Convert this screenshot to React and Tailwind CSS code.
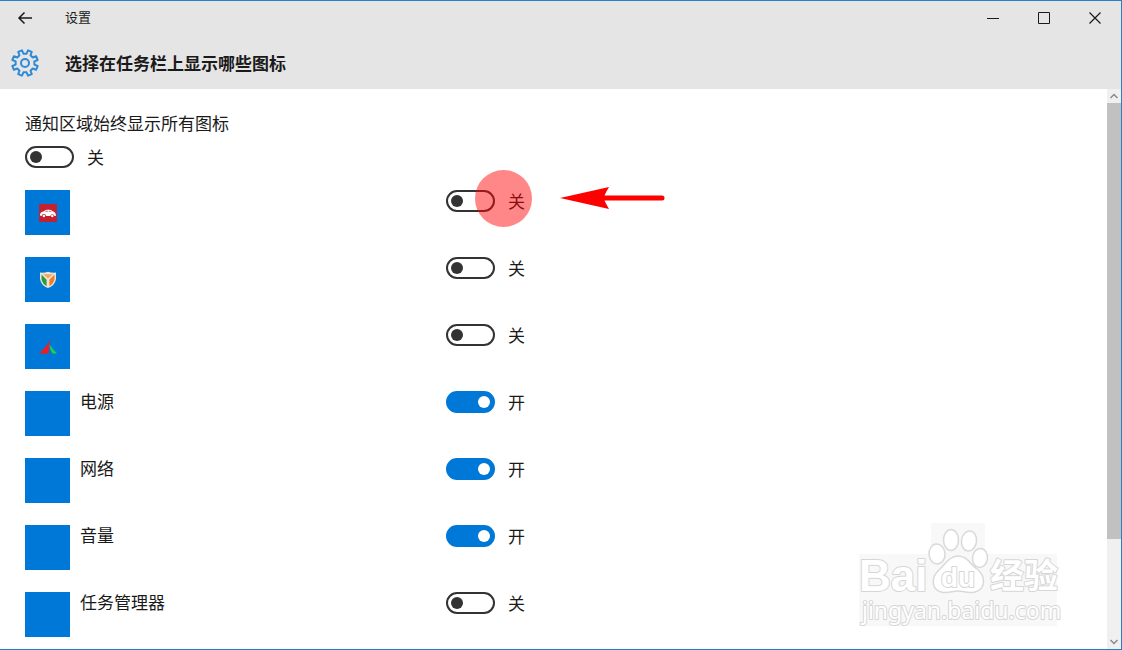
import { useState } from "react";

const items = [
  { id: "car", name: "", icon: "car", on: false },
  { id: "guard", name: "", icon: "shield", on: false },
  { id: "sail", name: "", icon: "sail", on: false },
  { id: "power", name: "电源", on: true },
  { id: "network", name: "网络", on: true },
  { id: "volume", name: "音量", on: true },
  { id: "taskmgr", name: "任务管理器", on: false },
];

// eight teeth, with a gap between two of them at the top
function gearPath() {
  const points = [];
  for (let i = 0; i < 8; i++) {
    const mid = 22.5 + i * 45;
    [[-13, 9.5], [-9, 13], [9, 13], [13, 9.5]].forEach(([offset, r]) => {
      const a = ((mid + offset) * Math.PI) / 180;
      points.push(`${(14 + r * Math.cos(a)).toFixed(2)} ${(14 + r * Math.sin(a)).toFixed(2)}`);
    });
  }
  return `M${points.join("L")}Z`;
}

function Gear() {
  return (
    <svg className="w-7 h-7" viewBox="0 0 28 28" fill="none" stroke="#2f8ad6" strokeWidth="2" strokeLinejoin="round">
      <path d={gearPath()} />
      <circle cx="14" cy="14" r="4" />
    </svg>
  );
}

function TrayIcon({ type }) {
  if (type === "car") {
    return (
      <svg className="w-[18px] h-[18px]" viewBox="0 0 18 18">
        <rect width="18" height="18" rx="1" fill="#c4202f" />
        <path d="M1 10.5C1.2 8.6 3 7.6 5 7.2C7 5.4 11.5 5.2 13.6 7.2C15.6 7.8 17 9 17 11.8L15.4 12A2.1 2.1 0 0 0 11.3 12H7A2.1 2.1 0 0 0 2.8 12L1 11.6Z" fill="#fff" />
        <path d="M6 7.6C7.2 6.6 8 6.5 8.8 6.5V8H6ZM9.8 6.5C11.2 6.6 12 7 12.8 8H9.8Z" fill="#d98a90" />
        <circle cx="4.9" cy="12" r="1.2" fill="#fff" />
        <circle cx="13.3" cy="12" r="1.2" fill="#fff" />
      </svg>
    );
  }
  if (type === "shield") {
    return (
      <svg className="w-[18px] h-[18px]" viewBox="0 0 18 18">
        <path d="M1 1.5Q5 2 9 .8Q13 2 17 1.500V8Q16 14.5 9 17Q2 14.5 1 8Z" fill="#e9e4dc" />
        <path d="M2.5 3.5L7.6 8.8V15Q3 12.5 2.5 8Z" fill="#2f9a3c" />
        <path d="M4 3Q9 3.6 14 3L9 7.5Z" fill="#f7a55b" />
        <path d="M15.5 3.5L10.4 8.8V15Q15 12.5 15.5 8Z" fill="#f47b20" />
      </svg>
    );
  }
  return (
    <svg className="w-[18px] h-[18px]" viewBox="0 0 18 18">
      <path d="M12.2 1Q10.8 4 10.2 7L9.800 15.500H0Q7.500 9 12.2 1Z" fill="#ee1c25" />
      <path d="M10.2 6.500Q13.500 10.500 18 15.500H13.500Q11 12 10.2 6.500Z" fill="#19d24f" />
    </svg>
  );
}

function Toggle({ id, label, checked, onChange }) {
  return (
    <div className="flex items-center gap-[13px]">
      <input
        id={id}
        type="checkbox"
        role="switch"
        aria-label={label}
        checked={checked}
        onChange={onChange}
        className="appearance-none flex items-center shrink-0 w-[49px] h-[22px] px-[3px] rounded-full border-2 border-[#333] bg-white before:content-[''] before:block before:w-3 before:h-3 before:rounded-full before:bg-[#333] checked:justify-end checked:border-[#0078d7] checked:bg-[#0078d7] checked:before:bg-white"
      />
      <label htmlFor={id} className="leading-[22px]">{checked ? "开" : "关"}</label>
    </div>
  );
}

function Pointer() {
  return (
    <>
      <span className="absolute -top-5 left-[29px] w-[57px] h-[57px] rounded-full bg-[#ff0000]/47 pointer-events-none" />
      <svg className="absolute -top-1 left-[114px] w-[106px] h-6" viewBox="0 0 106 24" fill="#fe0000">
        <path d="M0 12L49 1Q46 6 44.500 9.500H102Q104.500 9.500 104.500 12T102 14.500H44.500Q46 18 49 23Z" />
      </svg>
    </>
  );
}

function Watermark() {
  return (
    <svg className="absolute right-[58px] bottom-5 w-[206px] h-[108px] pointer-events-none" viewBox="0 0 206 108" aria-label="Baidu 经验">
      <path d="M2 33H74V2H128V33H200V105H2Z" fill="#f8f8f8" />
      <g fill="#fff" stroke="#d9d9d9" strokeWidth="1.500">
        <ellipse cx="80" cy="33" rx="8" ry="10" transform="rotate(-4 80 33)" />
        <ellipse cx="94" cy="19" rx="7.500" ry="10.500" />
        <ellipse cx="112" cy="20" rx="7.500" ry="10" transform="rotate(8 112 20)" />
        <ellipse cx="123" cy="37" rx="7.500" ry="9.500" transform="rotate(6 123 37)" />
        <path d="M101 35C110 35 114 44 120 48C129 55 129 68 118 71C111 73 107 70 101 70C95 70 91 73 84 71C74 68 74 56 82 49C88 44 92 35 101 35Z" />
      </g>
      <g fill="#fff" stroke="#d6d6d6" strokeWidth="2" paintOrder="stroke" strokeLinejoin="round">
        <text x="2" y="70" fontSize="44" fontWeight="bold" fontFamily="'Liberation Sans', sans-serif">Bai</text>
        <text x="84" y="66" fontSize="28" fontWeight="bold" fontFamily="'Liberation Sans', sans-serif">du</text>
        <text x="133" y="67" fontSize="34" fontWeight="bold" fontFamily="'Noto Sans CJK SC', sans-serif">经验</text>
        <text x="5" y="98" fontSize="23" fontFamily="'Noto Sans', sans-serif">jingyan.baidu.com</text>
      </g>
    </svg>
  );
}

export default function App() {
  const [showAll, setShowAll] = useState(false);
  const [state, setState] = useState(() => Object.fromEntries(items.map((i) => [i.id, i.on])));

  const flip = (id) => setState((s) => ({ ...s, [id]: !s[id] }));

  return (
    <div className="relative flex flex-col h-screen overflow-hidden border-t border-r border-b border-[#2a7fc4] bg-white text-[17px] text-[#1a1a1a] font-['Noto_Sans_CJK_SC',sans-serif]">
      <header className="bg-[#e5e5e5]">
        <div className="flex h-[34px] items-center">
          <button aria-label="返回" className="w-[50px] h-full flex items-center justify-center">
            <svg className="w-4 h-4" viewBox="0 0 16 16" fill="none" stroke="#1a1a1a" strokeWidth="1.500">
              <path d="M15 8H2M7.500 2.500L2 8L7.500 13.500" />
            </svg>
          </button>
          <span className="ml-[15px] pb-0.5 text-[13px]">设置</span>
          <div className="ml-auto mr-px flex h-full">
            <button aria-label="最小化" className="w-[51px] flex items-center justify-center">
              <svg className="w-3 h-3" viewBox="0 0 12 12" stroke="#1a1a1a"><path d="M0 6.500H12" /></svg>
            </button>
            <button aria-label="最大化" className="w-[51px] flex items-center justify-center">
              <svg className="w-3 h-3" viewBox="0 0 12 12" fill="none" stroke="#1a1a1a"><path d="M.5 .5H11.500V11.500H.5Z" /></svg>
            </button>
            <button aria-label="关闭" className="w-[51px] flex items-center justify-center">
              <svg className="w-3 h-3" viewBox="0 0 12 12" stroke="#1a1a1a" strokeWidth="1.200"><path d="M.5 .5L11.500 11.500M11.500 .5L.5 11.500" /></svg>
            </button>
          </div>
        </div>
        <div className="flex h-[54px] items-center pl-[11px] pt-0.5 gap-[26px]">
          <Gear />
          <h1 className="font-bold">选择在任务栏上显示哪些图标</h1>
        </div>
      </header>

      <div className="flex flex-1 min-h-0">
        <main className="flex-1 overflow-hidden pl-[25px] pt-[23px]">
          <h2 className="leading-[22px]">通知区域始终显示所有图标</h2>
          <div className="mt-3">
            <Toggle id="all" label="通知区域始终显示所有图标" checked={showAll} onChange={() => setShowAll(!showAll)} />
          </div>
          <ul className="mt-[22px] flex flex-col gap-[22px]">
            {items.map((item) => (
              <li key={item.id} className="flex items-start">
                <div className="w-[421px] shrink-0 flex items-start gap-2.5">
                  <div className="w-[45px] h-[45px] flex items-center justify-center bg-[#0078d7]">
                    {item.icon && <TrayIcon type={item.icon} />}
                  </div>
                  <span className="leading-5">{item.name}</span>
                </div>
                <div className="relative">
                  <Toggle id={item.id} label={item.name || item.id} checked={state[item.id]} onChange={() => flip(item.id)} />
                  {item.id === "car" && <Pointer />}
                </div>
              </li>
            ))}
          </ul>
        </main>

        <div className="w-3.5 flex flex-col bg-[#f0f0f0]">
          <button aria-label="向上滚动" className="h-3.5 flex items-center justify-center">
            <svg className="w-2 h-2" viewBox="0 0 8 8" fill="none" stroke="#8a8a8a" strokeWidth="1.500"><path d="M.5 6L4 2.500L7.500 6" /></svg>
          </button>
          <div className="flex-1">
            <div className="h-[82%] bg-[#c1c1c1]" />
          </div>
          <button aria-label="向下滚动" className="h-3.5 flex items-center justify-center">
            <svg className="w-2 h-2" viewBox="0 0 8 8" fill="none" stroke="#8a8a8a" strokeWidth="1.500"><path d="M.5 2L4 5.500L7.500 2" /></svg>
          </button>
        </div>
      </div>

      <Watermark />
    </div>
  );
}
